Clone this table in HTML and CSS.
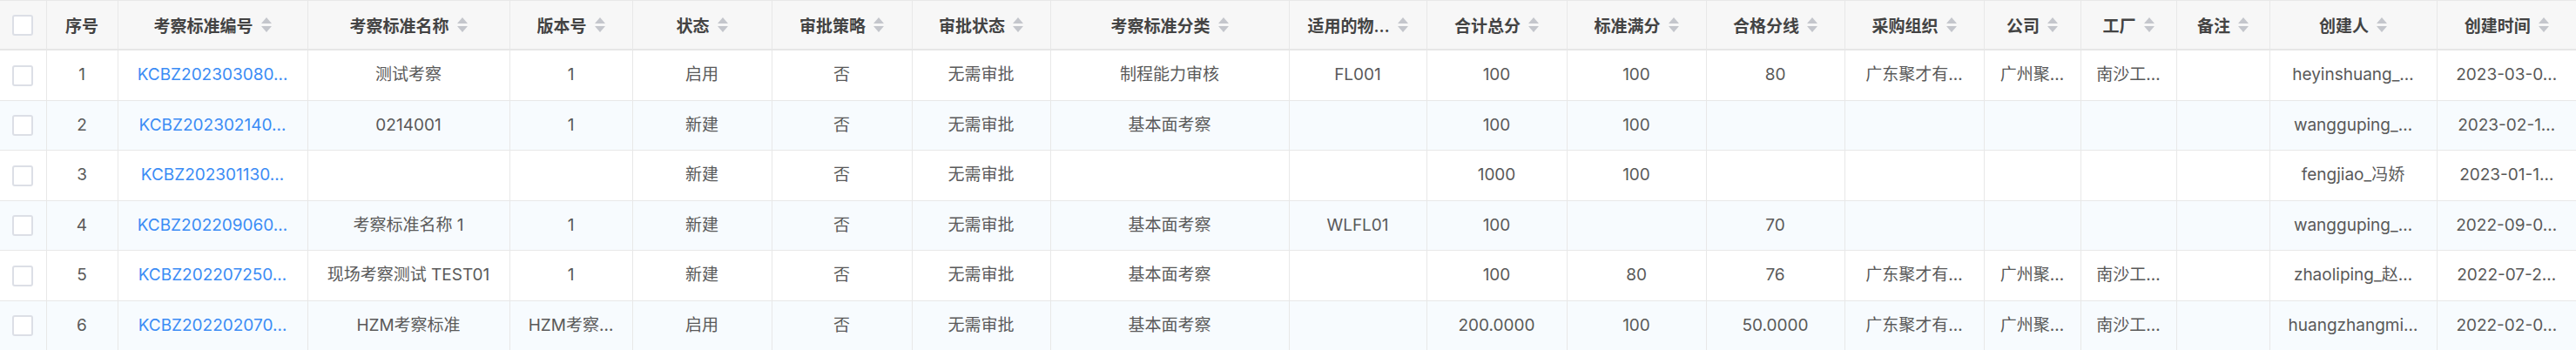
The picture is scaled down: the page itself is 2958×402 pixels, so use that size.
FILE: index.html
```html
<!DOCTYPE html>
<html lang="zh-CN">
<head>
<meta charset="utf-8">
<title>考察标准</title>
<link rel="stylesheet" href="styles.css">
</head>
<body>
<table class="grid">
  <colgroup>
    <col class="c-check"><col class="c-seq"><col class="c-code"><col class="c-name"><col class="c-ver">
    <col class="c-status"><col class="c-policy"><col class="c-astatus"><col class="c-cat"><col class="c-mat">
    <col class="c-total"><col class="c-full"><col class="c-pass"><col class="c-org"><col class="c-company">
    <col class="c-plant"><col class="c-note"><col class="c-user"><col class="c-time">
  </colgroup>
  <thead>
    <tr>
      <th><span class="box"></span></th>
      <th><span class="th">序号</span></th>
      <th><span class="th">考察标准编号<i class="sort"></i></span></th>
      <th><span class="th">考察标准名称<i class="sort"></i></span></th>
      <th><span class="th">版本号<i class="sort"></i></span></th>
      <th><span class="th">状态<i class="sort"></i></span></th>
      <th><span class="th">审批策略<i class="sort"></i></span></th>
      <th><span class="th">审批状态<i class="sort"></i></span></th>
      <th><span class="th">考察标准分类<i class="sort"></i></span></th>
      <th><span class="th">适用的物…<i class="sort"></i></span></th>
      <th><span class="th">合计总分<i class="sort"></i></span></th>
      <th><span class="th">标准满分<i class="sort"></i></span></th>
      <th><span class="th">合格分线<i class="sort"></i></span></th>
      <th><span class="th">采购组织<i class="sort"></i></span></th>
      <th><span class="th">公司<i class="sort"></i></span></th>
      <th><span class="th">工厂<i class="sort"></i></span></th>
      <th><span class="th">备注<i class="sort"></i></span></th>
      <th><span class="th">创建人<i class="sort"></i></span></th>
      <th><span class="th">创建时间<i class="sort"></i></span></th>
    </tr>
  </thead>
  <tbody>
    <tr>
      <td><span class="box"></span></td><td>1</td><td><a class="link">KCBZ202303080…</a></td><td>测试考察</td><td>1</td>
      <td>启用</td><td>否</td><td>无需审批</td><td>制程能力审核</td><td>FL001</td>
      <td>100</td><td>100</td><td>80</td><td>广东聚才有…</td><td>广州聚…</td>
      <td>南沙工…</td><td></td><td>heyinshuang_…</td><td>2023-03-0…</td>
    </tr>
    <tr class="alt">
      <td><span class="box"></span></td><td>2</td><td><a class="link">KCBZ202302140…</a></td><td>0214001</td><td>1</td>
      <td>新建</td><td>否</td><td>无需审批</td><td>基本面考察</td><td></td>
      <td>100</td><td>100</td><td></td><td></td><td></td>
      <td></td><td></td><td>wangguping_…</td><td>2023-02-1…</td>
    </tr>
    <tr>
      <td><span class="box"></span></td><td>3</td><td><a class="link">KCBZ202301130…</a></td><td></td><td></td>
      <td>新建</td><td>否</td><td>无需审批</td><td></td><td></td>
      <td>1000</td><td>100</td><td></td><td></td><td></td>
      <td></td><td></td><td>fengjiao_冯娇</td><td>2023-01-1…</td>
    </tr>
    <tr class="alt">
      <td><span class="box"></span></td><td>4</td><td><a class="link">KCBZ202209060…</a></td><td>考察标准名称 1</td><td>1</td>
      <td>新建</td><td>否</td><td>无需审批</td><td>基本面考察</td><td>WLFL01</td>
      <td>100</td><td></td><td>70</td><td></td><td></td>
      <td></td><td></td><td>wangguping_…</td><td>2022-09-0…</td>
    </tr>
    <tr>
      <td><span class="box"></span></td><td>5</td><td><a class="link">KCBZ202207250…</a></td><td>现场考察测试 TEST01</td><td>1</td>
      <td>新建</td><td>否</td><td>无需审批</td><td>基本面考察</td><td></td>
      <td>100</td><td>80</td><td>76</td><td>广东聚才有…</td><td>广州聚…</td>
      <td>南沙工…</td><td></td><td>zhaoliping_赵…</td><td>2022-07-2…</td>
    </tr>
    <tr class="alt">
      <td><span class="box"></span></td><td>6</td><td><a class="link">KCBZ202202070…</a></td><td>HZM考察标准</td><td>HZM考察…</td>
      <td>启用</td><td>否</td><td>无需审批</td><td>基本面考察</td><td></td>
      <td>200.0000</td><td>100</td><td>50.0000</td><td>广东聚才有…</td><td>广州聚…</td>
      <td>南沙工…</td><td></td><td>huangzhangmi…</td><td>2022-02-0…</td>
    </tr>
  </tbody>
</table>
</body>
</html>
```

FILE: styles.css
```css
html, body {
  margin: 0;
  padding: 0;
  background: #ffffff;
}

body {
  font-family: Inter, "Noto Sans CJK SC", sans-serif;
  font-size: 19px;
  color: #595959;
}

.grid {
  width: 2958px;
  table-layout: fixed;
  border-collapse: collapse;
  border-top: 1px solid #e8e8e8;
}

.c-check { width: 53px; }
.c-seq { width: 82px; }
.c-code { width: 218px; }
.c-name { width: 232px; }
.c-ver { width: 141px; }
.c-status { width: 160px; }
.c-policy { width: 161px; }
.c-astatus { width: 159px; }
.c-cat { width: 274px; }
.c-mat { width: 158px; }
.c-total { width: 161px; }
.c-full { width: 160px; }
.c-pass { width: 159px; }
.c-org { width: 160px; }
.c-company { width: 111px; }
.c-plant { width: 110px; }
.c-note { width: 107px; }
.c-user { width: 192px; }
.c-time { width: 160px; }

.grid th,
.grid td {
  padding: 0 4px;
  text-align: center;
  white-space: nowrap;
  overflow: hidden;
  border-left: 1px solid #e8e8e8;
  border-bottom: 1px solid #e8e8e8;
}

.grid th:first-child,
.grid td:first-child {
  border-left: none;
  padding: 0;
}

.grid thead th {
  height: 55px;
  background: #f7f7f7;
  color: #434343;
  font-weight: 600;
  border-bottom: 2px solid #e6e6e6;
}

.grid tbody td {
  height: 56.5px;
  line-height: 24px;
}

.grid tbody tr.alt td {
  background: #f7fbfe;
}

.th {
  display: inline-flex;
  align-items: center;
  gap: 9px;
}

.sort {
  display: inline-flex;
  flex-direction: column;
  gap: 3px;
}

.sort::before,
.sort::after {
  content: "";
  width: 0;
  height: 0;
  border-left: 6px solid transparent;
  border-right: 6px solid transparent;
}

.sort::before {
  border-bottom: 7px solid #c4c6cc;
}

.sort::after {
  border-top: 7px solid #c4c6cc;
}

.box {
  display: inline-block;
  width: 20px;
  height: 20px;
  border: 2px solid #dcdfe6;
  border-radius: 3px;
  background: #ffffff;
  vertical-align: middle;
}

.link {
  color: #3b8cf5;
  text-decoration: none;
}
```
